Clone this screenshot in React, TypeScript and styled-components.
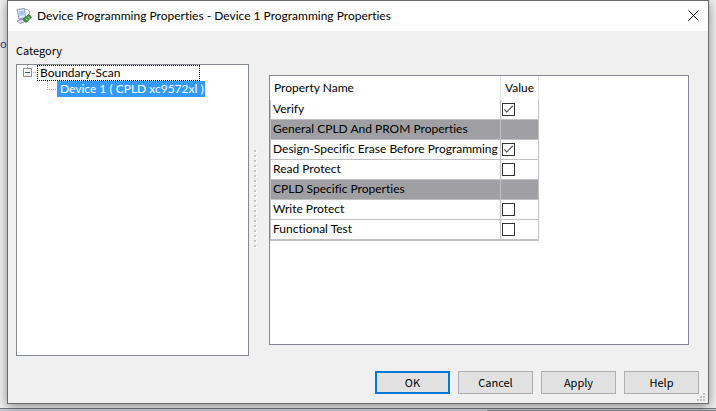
import React from "react";
import styled, { createGlobalStyle } from "styled-components";

const GlobalStyle = createGlobalStyle`
  * { box-sizing: border-box; }
  html, body, #root { height: 100%; margin: 0; }
  body {
    overflow: hidden;
    background: #f0f0f0;
    color: #000;
    font: 12px/16px Lato, "Noto Sans", sans-serif;
    font-variant-ligatures: none;
  }
`;

const Desktop = styled.div`
  display: grid;
  grid-template-columns: 7px minmax(0, 1fr) 7px;
  grid-template-rows: minmax(0, 1fr) 7px;
  height: 100vh;
  overflow: hidden;
`;

const Behind = styled.div`
  padding-top: 36px;
  color: #1f3a86;
  font: 11px/16px "Noto Sans", sans-serif;
`;

const TaskEdge = styled.div`
  grid-row: 2;
  grid-column: 1 / -1;
  display: grid;
  grid-template-columns: 68% 1fr;
  margin-top: 4px;
  border-top: 1px solid #6f7780;
  background: #c9cbcd;
`;

const TaskPane = styled.div`
  grid-column: 2;
  margin-top: 1px;
  border-top: 1px solid #858585;
`;

const Dialog = styled.main`
  position: relative;
  grid-column: 2;
  grid-row: 1;
  display: flex;
  flex-direction: column;
  border: 1px solid #696969;
  background: #f0f0f0;
  box-shadow: 0 2px 10px rgba(0, 0, 0, 0.45);
`;

const TitleBar = styled.header`
  display: flex;
  align-items: center;
  height: 30px;
  padding: 0 9px 0 8px;
  gap: 5px;
  background: #fff;
`;

const Title = styled.h1`
  flex: 1;
  margin: 0;
  font: inherit;
  white-space: nowrap;
`;

const CloseButton = styled.button`
  display: flex;
  padding: 0 0 2px;
  border: 0;
  background: none;
`;

const Content = styled.div`
  flex: 1;
  display: grid;
  grid-template-columns: 233px 20px minmax(0, 1fr);
  min-height: 0;
  padding: 11px 19px 0 8px;
`;

const CategoryPane = styled.section`
  display: flex;
  flex-direction: column;
  min-height: 0;
`;

const Label = styled.h2`
  margin: 0 0 6px;
  font: 11px/16px "Noto Sans CJK JP", sans-serif;
`;

const Tree = styled.ul`
  flex: 1;
  margin: 0;
  padding: 0 6px;
  border: 1px solid #828790;
  background: #fff;
  list-style: none;
`;

const Branch = styled.li`
  display: flex;
  align-items: center;
  height: 16px;
`;

const NodeLabel = styled.span<{ $kind: "focused" | "selected" }>`
  height: 16px;
  line-height: 14px;
  padding: 0 0 0 2px;
  white-space: nowrap;
  ${(p) =>
    p.$kind === "selected"
      ? "min-width: 143px; border: 1px solid #3399ff; background: #3399ff; color: #fff;"
      : "min-width: 163px; border: 1px dotted #000;"}
`;

const Splitter = styled.div`
  display: flex;
  align-items: center;
  justify-content: center;
  padding: 0 7px 0 0;
`;

const PropertyPane = styled.section`
  margin: 33px 0 11px;
  border: 1px solid #828790;
  background: #fff;
  overflow: hidden;
`;

const PropertyTable = styled.table`
  width: 269px;
  table-layout: fixed;
  border-collapse: separate;
  border-spacing: 0;
  border-bottom: 1px solid #c0c0c0;
`;

const NameColumn = styled.col`
  width: 231px;
`;

const HeadCell = styled.th`
  height: 24px;
  padding: 0 4px;
  border-right: 1px solid #e5e5e5;
  font-weight: normal;
  text-align: left;
`;

const Row = styled.tr<{ $group?: boolean }>`
  background: ${(p) => (p.$group ? "#a0a0a4" : "#fff")};
`;

const Cell = styled.td`
  height: 20px;
  padding: 0 1px;
  border-right: 1px solid #c0c0c0;
  border-bottom: 1px solid #c0c0c0;
  line-height: 16px;
  white-space: nowrap;
  &:first-child {
    padding: 0 0 2px 2px;
    border-left: 1px solid #c0c0c0;
  }
`;

const Check = styled.input`
  appearance: none;
  display: block;
  width: 13px;
  height: 13px;
  margin: 0;
  border: 1px solid #333;
  background: #fff;
  &:checked::after {
    content: "";
    display: block;
    box-sizing: border-box;
    width: 9px;
    height: 4px;
    margin: 2px 1px;
    border: solid #333;
    border-width: 0 0 1px 1px;
    transform: rotate(-45deg);
  }
`;

const Footer = styled.footer`
  display: flex;
  align-items: flex-start;
  justify-content: flex-end;
  gap: 8px;
  height: 47px;
  padding: 15px 9px 0;
`;

const Button = styled.button<{ $primary?: boolean }>`
  width: 75px;
  height: 23px;
  padding: 0 0 2px;
  border: ${(p) => (p.$primary ? "2px solid #0078d7" : "1px solid #adadad")};
  background: #e1e1e1;
  color: #000;
  font: 11px/16px "Noto Sans CJK JP", sans-serif;
`;

const Grip = styled.svg`
  position: absolute;
  right: 2px;
  bottom: 1px;
`;

type Property = { name: string; group?: boolean; checked?: boolean };

const properties: Property[] = [
  { name: "Verify", checked: true },
  { name: "General CPLD And PROM Properties", group: true },
  { name: "Design-Specific Erase Before Programming", checked: true },
  { name: "Read Protect" },
  { name: "CPLD Specific Properties", group: true },
  { name: "Write Protect" },
  { name: "Functional Test" },
];

const splitterDots = Array.from({ length: 20 }, (_, i) => i * 5);

function AppIcon() {
  return (
    <svg width="16" height="16" viewBox="0 0 16 16" aria-hidden="true">
      <path d="M1 1.500 8.500.5l1 9-6.500 1.500z" fill="#e6effb" stroke="#8791b8" />
      <path d="M3 3l4.500-.6.5 4.600-4.300.8z" fill="#9cc3f2" />
      <path d="M3 11l4-1v2l-3 .5z" fill="#8f93b5" />
      <path d="M1 13l7-2.500 2 2.500-6 2.500z" fill="#dcdcec" stroke="#9a97bd" />
      <path d="M9.500 1.500q5-.5 4 5" fill="none" stroke="#b0a2a8" />
      <path d="M7 11.500 12.500 6.500 15.500 9 10 14.500z" fill="#3f9a45" stroke="#2d6b35" />
      <path d="M9.500 11l2 1M11.500 9l2 1.500" stroke="#b5e08f" />
    </svg>
  );
}

export default function App() {
  return (
    <>
      <GlobalStyle />
      <Desktop>
        <Behind>o</Behind>
        <TaskEdge><TaskPane /></TaskEdge>
        <Dialog>
          <TitleBar>
            <AppIcon />
            <Title>Device Programming Properties - Device 1 Programming Properties</Title>
            <CloseButton aria-label="Close">
              <svg width="11" height="11" viewBox="0 0 11 11" aria-hidden="true">
                <path d="M.5.5l10 10M10.500.5l-10 10" stroke="#000" fill="none" />
              </svg>
            </CloseButton>
          </TitleBar>
          <Content>
            <CategoryPane>
              <Label id="category">Category</Label>
              <Tree aria-labelledby="category">
                <Branch>
                  <svg width="14" height="16" viewBox="0 0 14 16" aria-hidden="true">
                    <rect x=".5" y="3.500" width="8" height="8" fill="#fff" stroke="#919191" />
                    <path d="M2 7.500h5" stroke="#3a5a9a" />
                    <path d="M10 7.500h4M4.500 0v3" stroke="#a0a0a0" strokeDasharray="1 1" />
                  </svg>
                  <NodeLabel $kind="focused">Boundary-Scan</NodeLabel>
                </Branch>
                <Branch>
                  <svg width="34" height="16" viewBox="0 0 34 16" aria-hidden="true">
                    <path d="M24.500 0v8M24 8.500h10" stroke="#a0a0a0" fill="none" strokeDasharray="1 1" />
                  </svg>
                  <NodeLabel $kind="selected">Device 1 ( CPLD xc9572xl )</NodeLabel>
                </Branch>
              </Tree>
            </CategoryPane>
            <Splitter>
              <svg width="3" height="98" viewBox="0 0 3 98" aria-hidden="true">
                {splitterDots.map((y) => (
                  <g key={y}>
                    <rect x="1" y={y + 1} width="2" height="2" fill="#fff" />
                    <rect x="0" y={y} width="2" height="2" fill="#c4c4c4" />
                  </g>
                ))}
              </svg>
            </Splitter>
            <PropertyPane>
              <PropertyTable>
                <colgroup><NameColumn /><col /></colgroup>
                <thead>
                  <tr><HeadCell>Property Name</HeadCell><HeadCell>Value</HeadCell></tr>
                </thead>
                <tbody>
                  {properties.map((p) => (
                    <Row key={p.name} $group={p.group}>
                      <Cell>{p.name}</Cell>
                      <Cell>{!p.group && <Check type="checkbox" aria-label={p.name} defaultChecked={p.checked} />}</Cell>
                    </Row>
                  ))}
                </tbody>
              </PropertyTable>
            </PropertyPane>
          </Content>
          <Footer>
            <Button $primary>OK</Button>
            <Button>Cancel</Button>
            <Button>Apply</Button>
            <Button>Help</Button>
          </Footer>
          <Grip width="9" height="9" viewBox="0 0 9 9" fill="#bfbfbf" aria-hidden="true">
            <path d="M6 0h2v2h-2zM3 3h2v2h-2zM6 3h2v2h-2zM0 6h2v2h-2zM3 6h2v2h-2zM6 6h2v2h-2z" />
          </Grip>
        </Dialog>
      </Desktop>
    </>
  );
}
